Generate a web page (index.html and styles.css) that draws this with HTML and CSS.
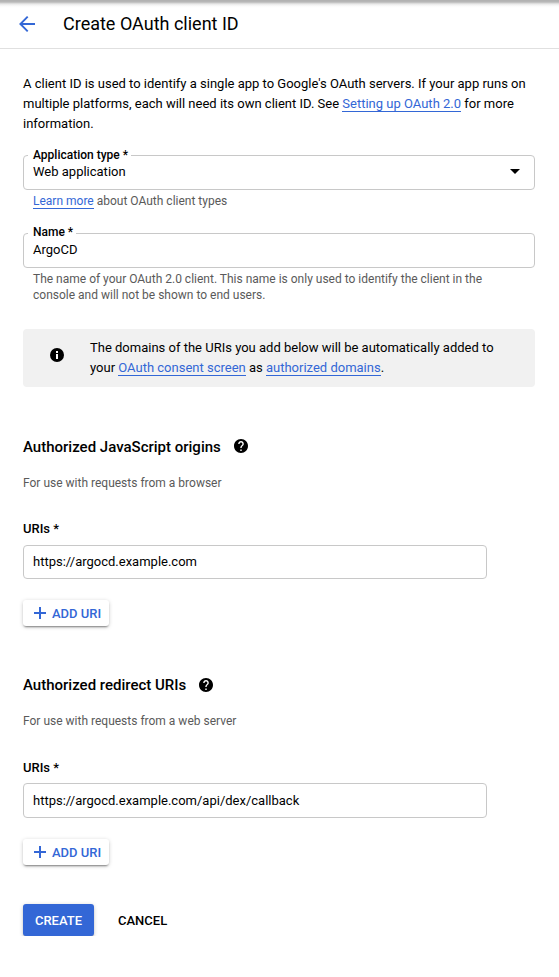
FILE: index.html
```html
<!DOCTYPE html>
<html lang="en">
<head>
<meta charset="utf-8">
<title>Create OAuth client ID</title>
<link rel="stylesheet" href="styles.css">
</head>
<body>
<header class="topbar">
  <svg class="back" width="18" height="18" viewBox="0 0 18 18"><path d="M17 9H2.500M9.700 1.700L2.400 9l7.300 7.300" fill="none" stroke="#3367d6" stroke-width="1.9"/></svg>
  <h1>Create OAuth client ID</h1>
</header>
<main>
  <p class="intro">A client ID is used to identify a single app to Google's OAuth servers. If your app runs on multiple platforms, each will need its own client ID. See <a>Setting up OAuth 2.0</a> for more information.</p>

  <div class="field">
    <span class="label">Application type *</span>
    <span class="value">Web application</span>
    <svg class="caret" width="10" height="5" viewBox="0 0 10 5"><path d="M0 0h10L5 5z"/></svg>
  </div>
  <p class="hint"><a>Learn more</a> about OAuth client types</p>

  <div class="field name">
    <span class="label">Name *</span>
    <span class="value">ArgoCD</span>
  </div>
  <p class="hint">The name of your OAuth 2.0 client. This name is only used to identify the client in the console and will not be shown to end users.</p>

  <div class="notice">
    <svg class="info" width="14" height="14" viewBox="0 0 14 14"><circle cx="7" cy="7" r="7"/><path d="M6 6h2v5H6zM6 3h2v2H6z" fill="#fff"/></svg>
    <p>The domains of the URIs you add below will be automatically added to your <a>OAuth consent screen</a> as <a>authorized domains</a>.</p>
  </div>

  <section class="origins">
    <h2>Authorized JavaScript origins
      <svg width="14" height="14" viewBox="2 2 20 20"><path d="M12 2C6.480 2 2 6.480 2 12s4.480 10 10 10 10-4.480 10-10S17.520 2 12 2zm1 17h-2v-2h2v2zm2.070-7.750l-.9.920C13.450 12.900 13 13.500 13 15h-2v-.5c0-1.100.45-2.100 1.170-2.830l1.240-1.260c.37-.36.59-.86.59-1.410 0-1.100-.9-2-2-2s-2 .9-2 2H8c0-2.210 1.790-4 4-4s4 1.790 4 4c0 .88-.36 1.680-.93 2.250z"/></svg>
    </h2>
    <p class="sub">For use with requests from a browser</p>
    <h3>URIs *</h3>
    <div class="input">https://argocd.example.com</div>
    <button class="add"><svg width="12" height="12" viewBox="0 0 12 12"><path d="M6 0v12M0 6h12" stroke="#3367d6" stroke-width="2"/></svg>ADD URI</button>
  </section>

  <section class="redirects">
    <h2>Authorized redirect URIs
      <svg width="14" height="14" viewBox="2 2 20 20"><path d="M12 2C6.480 2 2 6.480 2 12s4.480 10 10 10 10-4.480 10-10S17.520 2 12 2zm1 17h-2v-2h2v2zm2.070-7.750l-.9.920C13.450 12.900 13 13.500 13 15h-2v-.5c0-1.100.45-2.100 1.170-2.830l1.240-1.260c.37-.36.59-.86.59-1.410 0-1.100-.9-2-2-2s-2 .9-2 2H8c0-2.210 1.790-4 4-4s4 1.790 4 4c0 .88-.36 1.680-.93 2.250z"/></svg>
    </h2>
    <p class="sub">For use with requests from a web server</p>
    <h3>URIs *</h3>
    <div class="input">https://argocd.example.com/api/dex/callback</div>
    <button class="add"><svg width="12" height="12" viewBox="0 0 12 12"><path d="M6 0v12M0 6h12" stroke="#3367d6" stroke-width="2"/></svg>ADD URI</button>
  </section>

  <div class="actions">
    <button class="create">CREATE</button>
    <button class="cancel">CANCEL</button>
  </div>
</main>
</body>
</html>
```
FILE: styles.css
```css
* { box-sizing: border-box; margin: 0; padding: 0; }
body { background: #fff; color: #000; font: 13px/20px Roboto, "Liberation Sans", sans-serif; }
a { color: #3367d6; border-bottom: 1px solid #3367d6; }
button { border: 0; border-radius: 3px; font: 500 13px/20px Roboto, "Liberation Sans", sans-serif; }

.topbar {
  display: flex; align-items: center; height: 49px; padding: 0 0 1px 18px;
  border-bottom: 1px solid #e0e0e0;
  background: linear-gradient(#b0b0b0 0, #b8b8b8 2px, #e8e8e8 4px, #fafafa 6px, #fff 8px);
}
h1 { margin-left: 27px; font-size: 18px; font-weight: 400; line-height: 24px; }
main { padding: 25px 24px 0 23px; }

.field {
  position: relative; display: flex; align-items: center; justify-content: space-between;
  height: 35px; margin-top: 21px; padding: 0 14px 2px 9px;
  border: 1px solid #c8c8c8; border-radius: 4px;
}
.field.name { margin-top: 24px; }
.label {
  position: absolute; left: 4px; top: -8px; padding: 0 3px 0 5px;
  background: #fff; font-size: 12px; font-weight: 500; line-height: 14px;
}
.name .label { top: -9px; }
.hint { padding: 3px 40px 0 10px; color: #5a5a5a; font-size: 12px; line-height: 16px; }

.notice {
  display: flex; height: 58px; margin-top: 26px; padding: 9px 27px 0;
  border-radius: 4px; background: #f1f1f1;
}
.info { flex: none; margin: 10px 26px 0 0; }

section h2 { display: flex; align-items: center; gap: 13px; font-size: 15px; font-weight: 500; line-height: 20px; }
.origins { margin-top: 50px; }
.origins h2 svg { margin-bottom: 2px; }
.redirects { margin-top: 49px; }
.sub { margin-top: 18px; color: #5a5a5a; font-size: 12px; line-height: 16px; }
h3 { margin-top: 30px; font-size: 13px; font-weight: 500; line-height: 16px; }
.input {
  width: 464px; height: 34px; margin-top: 8px; padding-left: 9px;
  border: 1px solid #c8c8c8; border-radius: 4px; line-height: 32px;
}
.redirects .input { height: 35px; margin-top: 7px; line-height: 33px; }
.redirects h3 { margin-top: 31px; }
.add {
  display: flex; align-items: center; gap: 6px; width: 86px; height: 26px; margin-top: 21px; padding: 2px 0 0 11px;
  background: #fff; color: #3367d6; white-space: nowrap;
  box-shadow: 0 2px 2px -1px rgba(0,0,0,.42), 0 1px 4px rgba(0,0,0,.2);
}
.add svg { margin-bottom: 2px; }
.actions { display: flex; align-items: center; gap: 24px; margin-top: 39px; }
.create { width: 71px; height: 32px; padding-top: 1px; background: #3367d6; color: #fff; box-shadow: 0 2px 2px -1px rgba(0,0,0,.42), 0 1px 4px rgba(0,0,0,.2); }
.cancel { padding-top: 1px; background: none; color: #000; }
```
